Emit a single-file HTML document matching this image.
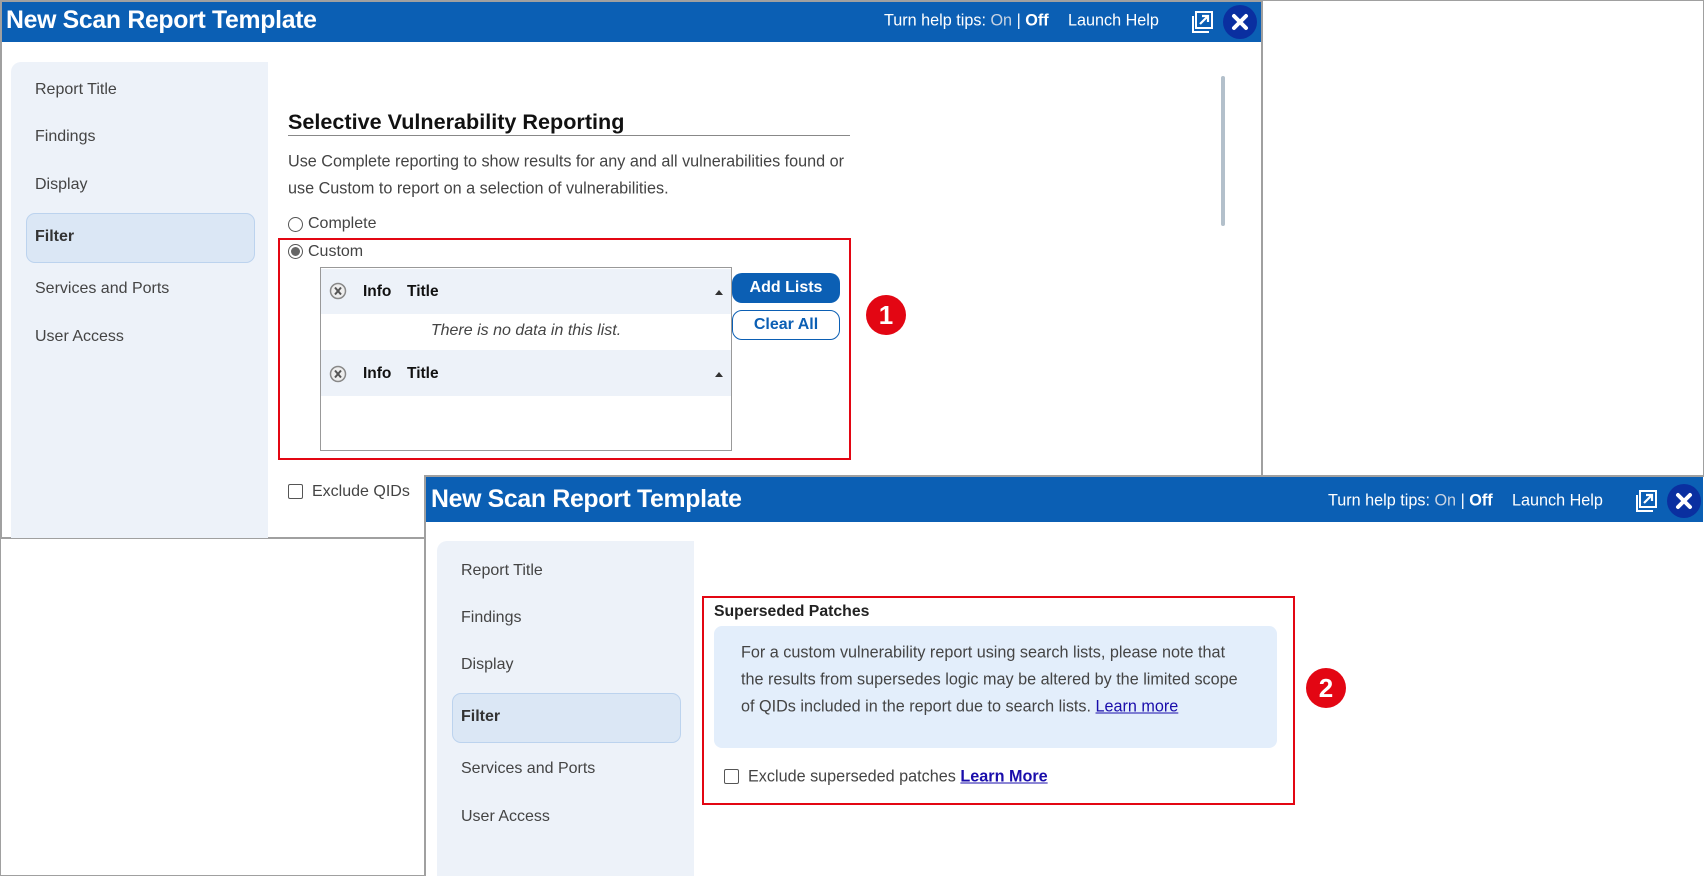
<!DOCTYPE html>
<html><head><meta charset="utf-8"><style>
*{margin:0;padding:0;box-sizing:border-box}
body{width:1704px;height:876px;position:relative;overflow:hidden;background:#fff;font-family:"Liberation Sans",Arial,sans-serif;color:#333}
.a{position:absolute;white-space:nowrap}
.hdr{position:absolute;background:#0b5fb4;color:#fff}
.side{position:absolute;background:#edf2f9;border-radius:10px 0 0 0}
.it{position:absolute;font-size:16px;color:#444;transform:translateY(-50%)}
.sel{position:absolute;background:#dbe7f5;border:1px solid #bcd3ee;border-radius:9px}
.close{position:absolute;width:34px;height:34px;border-radius:50%;background:#0a2fa0}
.badge{position:absolute;width:40px;height:40px;border-radius:50%;background:#e30613;color:#fff;font-weight:bold;font-size:26px;text-align:center;line-height:40px}
.red{position:absolute;border:2px solid #e30613}
.c{transform:translateY(-50%)}
</style></head><body>
<div class="a" style="left:0;top:0;width:1704px;height:876px;border:1px solid #a0a0a0"></div>

<div class="a" style="left:0;top:0;width:1263px;height:539px;border:2px solid #a0a0a0"></div>
<div class="hdr" style="left:2px;top:2px;width:1259px;height:40px"></div>
<div class="a c" style="left:6px;top:21px;color:#fff;font-weight:bold;font-size:24.8px;letter-spacing:-0.3px">New Scan Report Template</div>
<div class="a c" style="left:884px;top:21px;color:#fff;font-size:16.2px">Turn help tips: <span style="color:#c7d3e3">On</span> | <b>Off</b></div>
<div class="a c" style="left:1068px;top:21px;color:#fff;font-size:16.2px">Launch Help</div>
<svg class="a" style="left:1192px;top:11px" width="22" height="22" viewBox="0 0 22 22"><rect x="4" y="1" width="16" height="16" fill="none" stroke="#fff" stroke-width="2"/><path d="M1 5v16h16" fill="none" stroke="#fff" stroke-width="2"/><path d="M8 13l8-8M10 5h6v6" fill="none" stroke="#fff" stroke-width="2.2"/></svg>
<div class="close" style="left:1223px;top:5px"></div>
<svg class="a" style="left:1231px;top:13px" width="18" height="18" viewBox="0 0 18 18"><path d="M3 3l12 12M15 3L3 15" stroke="#fff" stroke-width="4" stroke-linecap="round"/></svg>

<div class="side" style="left:11px;top:62px;width:257px;height:476px"></div>
<div class="it" style="left:35px;top:90px">Report Title</div>
<div class="it" style="left:35px;top:137px">Findings</div>
<div class="it" style="left:35px;top:185px">Display</div>
<div class="sel" style="left:26px;top:213px;width:229px;height:50px"></div>
<div class="it" style="left:35px;top:237px;font-weight:bold;color:#333">Filter</div>
<div class="it" style="left:35px;top:289px">Services and Ports</div>
<div class="it" style="left:35px;top:337px">User Access</div>

<div class="a c" style="left:288px;top:122px;font-size:21.6px;font-weight:bold;color:#111">Selective Vulnerability Reporting</div>
<div class="a" style="left:288px;top:135px;width:562px;height:1px;background:#888"></div>
<div class="a c" style="left:288px;top:162px;font-size:16.2px;color:#444">Use Complete reporting to show results for any and all vulnerabilities found or</div>
<div class="a c" style="left:288px;top:189px;font-size:16.2px;color:#444">use Custom to report on a selection of vulnerabilities.</div>
<div class="a" style="left:288px;top:217px;width:15px;height:15px;border:1px solid #555;border-radius:50%"></div>
<div class="a c" style="left:308px;top:224px;font-size:16px;color:#444">Complete</div>
<div class="a" style="left:288px;top:244px;width:15px;height:15px;border:1px solid #555;border-radius:50%"><div style="margin:2px;width:9px;height:9px;border-radius:50%;background:#666"></div></div>
<div class="a c" style="left:308px;top:252px;font-size:16px;color:#444">Custom</div>

<div class="red" style="left:278px;top:238px;width:573px;height:222px"></div>
<div class="a" style="left:320px;top:267px;width:412px;height:184px;border:1px solid #999"></div>
<div class="a" style="left:321px;top:269px;width:410px;height:45px;background:#edf2f9"></div>
<div class="a" style="left:321px;top:350px;width:410px;height:46px;background:#edf2f9"></div>
<svg class="a" style="left:329px;top:282px" width="18" height="18" viewBox="0 0 18 18"><circle cx="9" cy="9" r="7.5" fill="#eee" stroke="#888" stroke-width="1.5"/><path d="M6 5.5l6 7M12 5.5l-6 7" stroke="#555" stroke-width="2"/></svg>
<svg class="a" style="left:329px;top:365px" width="18" height="18" viewBox="0 0 18 18"><circle cx="9" cy="9" r="7.5" fill="#eee" stroke="#888" stroke-width="1.5"/><path d="M6 5.5l6 7M12 5.5l-6 7" stroke="#555" stroke-width="2"/></svg>
<div class="a c" style="left:363px;top:292px;font-size:15.5px;font-weight:bold;color:#111">Info</div>
<div class="a c" style="left:407px;top:292px;font-size:15.5px;font-weight:bold;color:#111">Title</div>
<div class="a c" style="left:363px;top:374px;font-size:15.5px;font-weight:bold;color:#111">Info</div>
<div class="a c" style="left:407px;top:374px;font-size:15.5px;font-weight:bold;color:#111">Title</div>
<div class="a" style="left:715px;top:290px;border-left:4px solid transparent;border-right:4px solid transparent;border-bottom:5px solid #333"></div>
<div class="a" style="left:715px;top:372px;border-left:4px solid transparent;border-right:4px solid transparent;border-bottom:5px solid #333"></div>
<div class="a c" style="left:321px;width:410px;text-align:center;top:331px;font-size:16px;font-style:italic;color:#444">There is no data in this list.</div>

<div class="a" style="left:732px;top:273px;width:108px;height:30px;background:#0b5fb4;border-radius:10px;color:#fff;font-weight:bold;font-size:16px;text-align:center;line-height:30px">Add Lists</div>
<div class="a" style="left:732px;top:310px;width:108px;height:30px;background:#fff;border:1px solid #0b5fb4;border-radius:10px;color:#0b5fb4;font-weight:bold;font-size:16px;text-align:center;line-height:28px">Clear All</div>
<div class="badge" style="left:866px;top:295px">1</div>

<div class="a" style="left:1221px;top:76px;width:4px;height:150px;background:#b3c0cb;border-radius:2px"></div>
<div class="a" style="left:288px;top:484px;width:15px;height:15px;border:1px solid #555;border-radius:2px"></div>
<div class="a c" style="left:312px;top:492px;font-size:16px;color:#444">Exclude QIDs</div>

<div class="a" style="left:424px;top:475px;width:1280px;height:401px;background:#fff;border-left:2px solid #a0a0a0;border-top:2px solid #a0a0a0"></div>
<div class="hdr" style="left:426px;top:477px;width:1277px;height:45px"></div>
<div class="a c" style="left:431px;top:500px;color:#fff;font-weight:bold;font-size:24.8px;letter-spacing:-0.3px">New Scan Report Template</div>
<div class="a c" style="left:1328px;top:501px;color:#fff;font-size:16.2px">Turn help tips: <span style="color:#c7d3e3">On</span> | <b>Off</b></div>
<div class="a c" style="left:1512px;top:501px;color:#fff;font-size:16.2px">Launch Help</div>
<svg class="a" style="left:1636px;top:490px" width="22" height="22" viewBox="0 0 22 22"><rect x="4" y="1" width="16" height="16" fill="none" stroke="#fff" stroke-width="2"/><path d="M1 5v16h16" fill="none" stroke="#fff" stroke-width="2"/><path d="M8 13l8-8M10 5h6v6" fill="none" stroke="#fff" stroke-width="2.2"/></svg>
<div class="close" style="left:1667px;top:484px"></div>
<svg class="a" style="left:1675px;top:492px" width="18" height="18" viewBox="0 0 18 18"><path d="M3 3l12 12M15 3L3 15" stroke="#fff" stroke-width="4" stroke-linecap="round"/></svg>

<div class="side" style="left:437px;top:541px;width:257px;height:335px"></div>
<div class="it" style="left:461px;top:571px">Report Title</div>
<div class="it" style="left:461px;top:618px">Findings</div>
<div class="it" style="left:461px;top:665px">Display</div>
<div class="sel" style="left:452px;top:693px;width:229px;height:50px"></div>
<div class="it" style="left:461px;top:717px;font-weight:bold;color:#333">Filter</div>
<div class="it" style="left:461px;top:769px">Services and Ports</div>
<div class="it" style="left:461px;top:817px">User Access</div>

<div class="red" style="left:702px;top:596px;width:593px;height:209px"></div>
<div class="a c" style="left:714px;top:612px;font-size:15.8px;font-weight:bold;color:#222">Superseded Patches</div>
<div class="a" style="left:714px;top:626px;width:563px;height:122px;background:#e3eefb;border-radius:8px"></div>
<div class="a c" style="left:741px;top:653px;font-size:16.2px;color:#444">For a custom vulnerability report using search lists, please note that</div>
<div class="a c" style="left:741px;top:680px;font-size:16.2px;color:#444">the results from supersedes logic may be altered by the limited scope</div>
<div class="a c" style="left:741px;top:707px;font-size:16.2px;color:#444">of QIDs included in the report due to search lists. <span style="color:#1a0dab;text-decoration:underline">Learn more</span></div>
<div class="a" style="left:724px;top:769px;width:15px;height:15px;border:1px solid #555;border-radius:2px"></div>
<div class="a c" style="left:748px;top:777px;font-size:16.2px;color:#444">Exclude superseded patches <b style="color:#1a0dab;text-decoration:underline">Learn More</b></div>
<div class="badge" style="left:1306px;top:668px">2</div>
</body></html>
